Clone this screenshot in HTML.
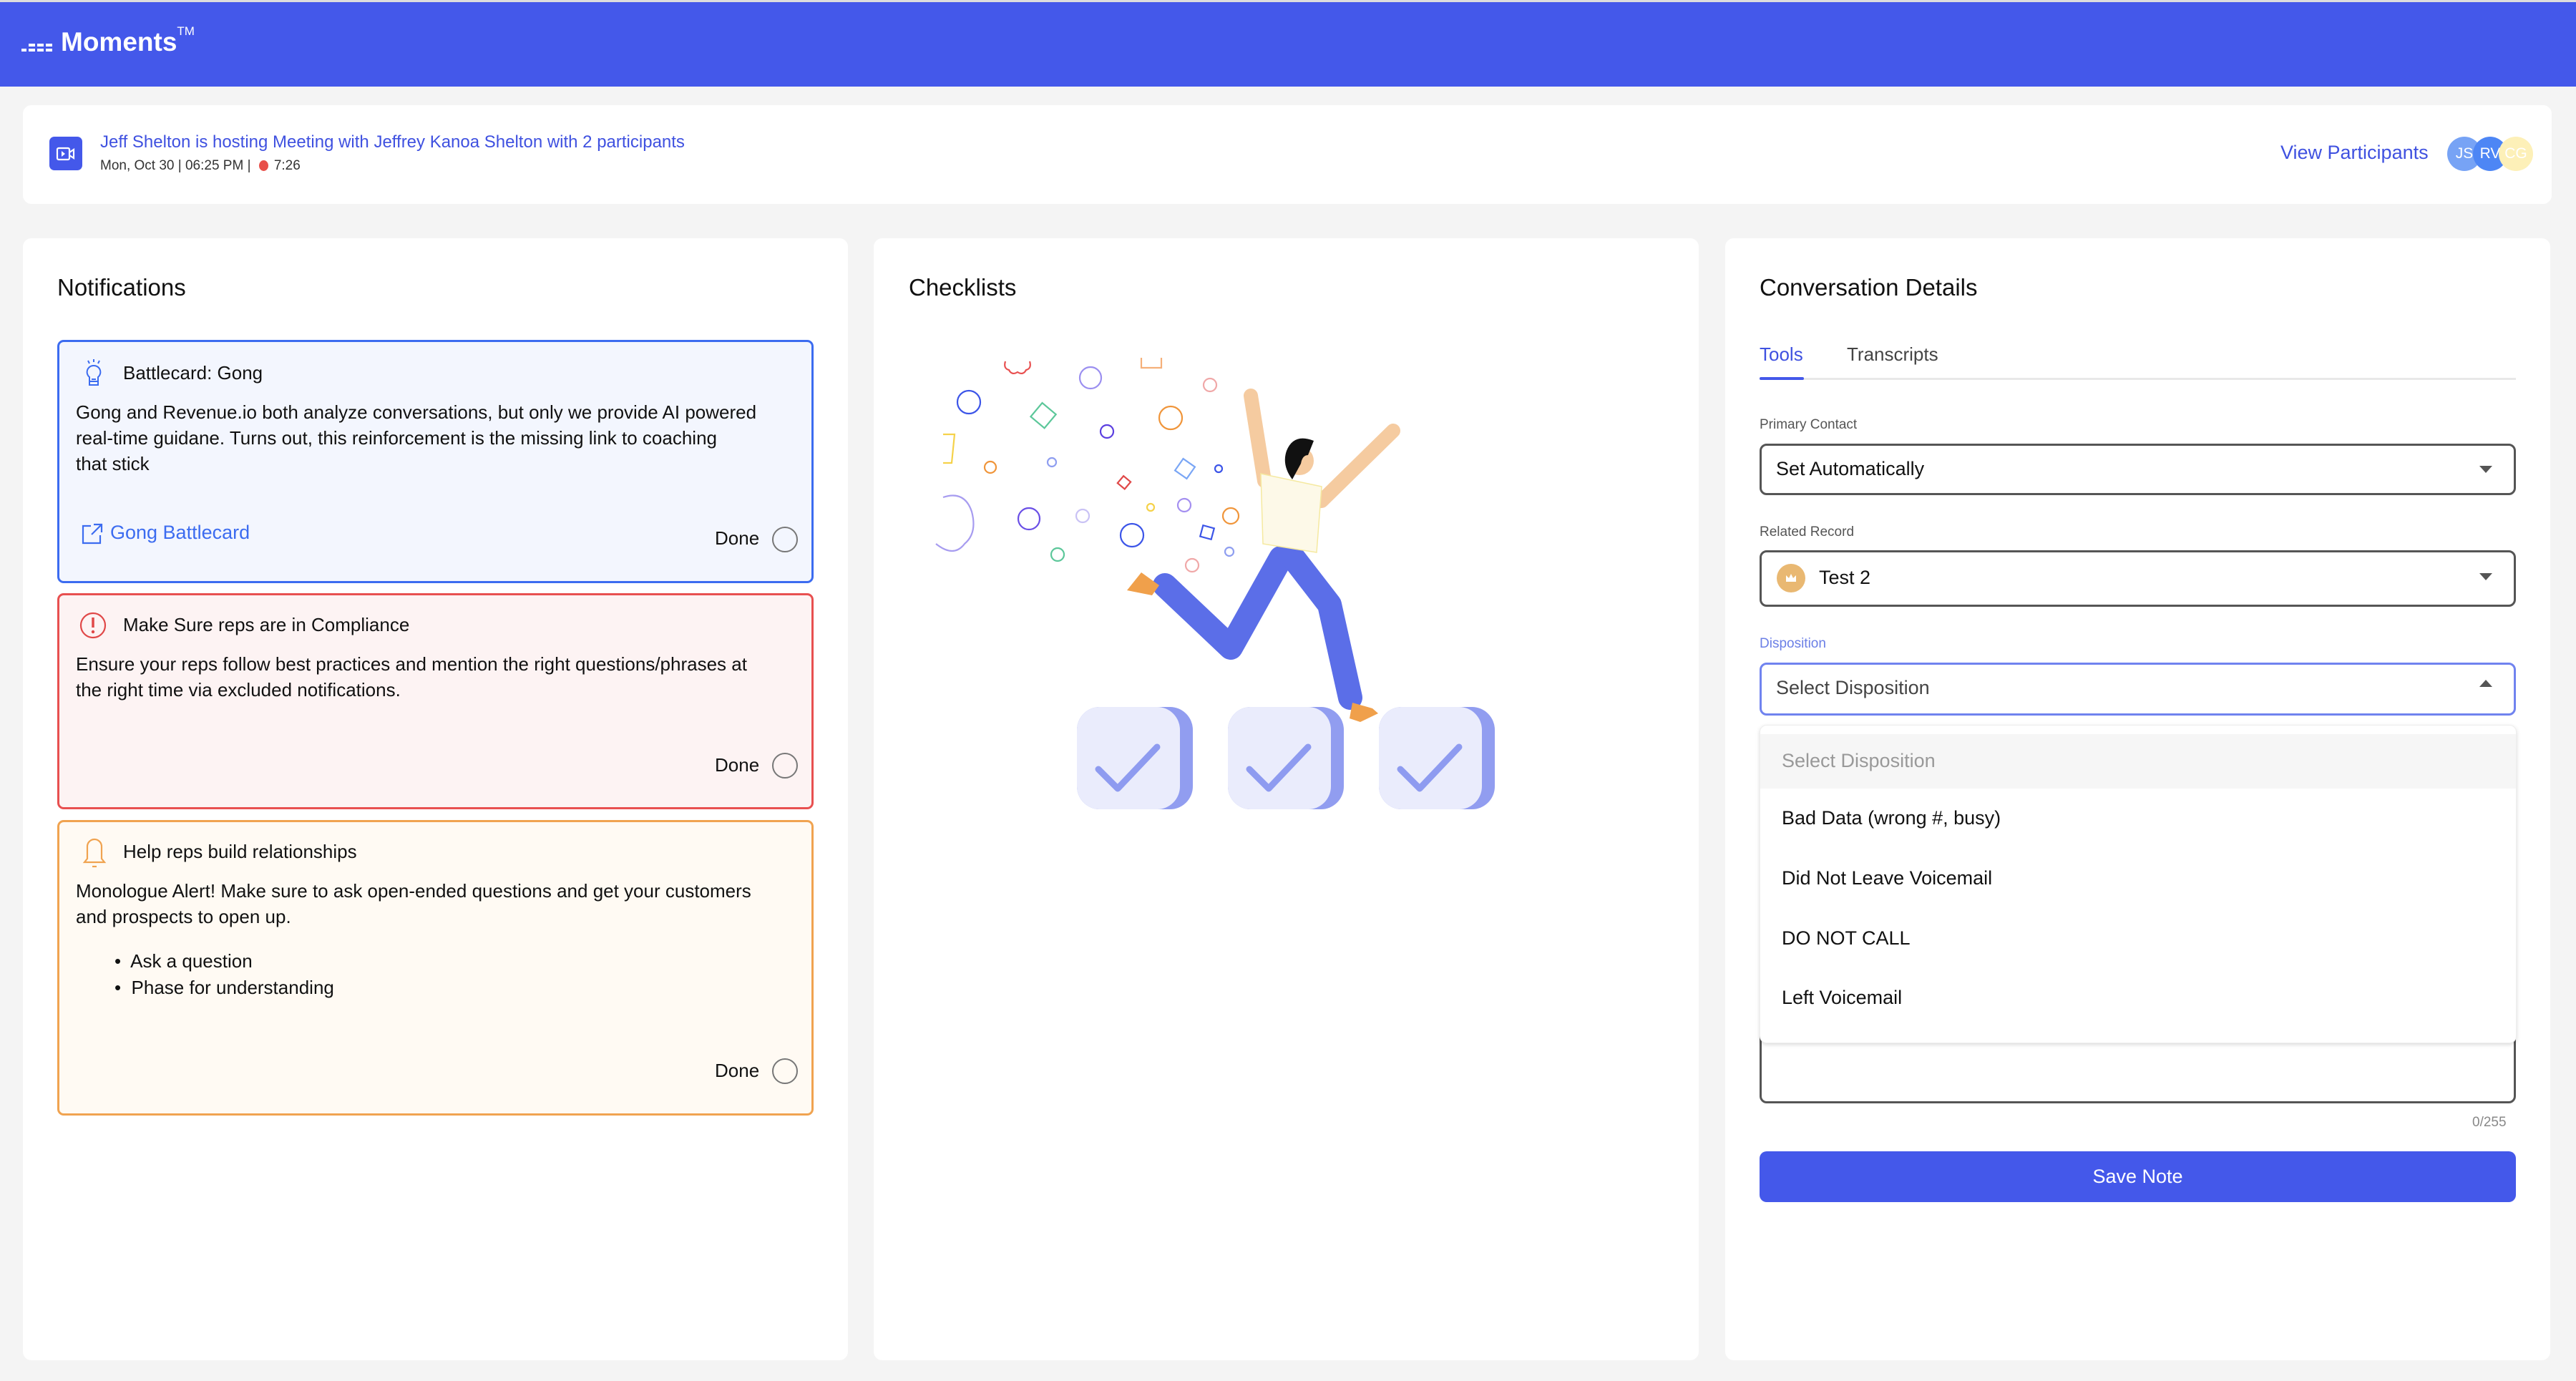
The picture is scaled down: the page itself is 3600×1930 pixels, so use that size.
<!DOCTYPE html>
<html><head><meta charset="utf-8"><style>
*{box-sizing:border-box;margin:0;padding:0}
body{width:3600px;height:1930px;background:#f4f4f4;font-family:"Liberation Sans",sans-serif;position:relative;overflow:hidden;color:#111}
.a{position:absolute;white-space:nowrap}
.hdr{left:0;top:3px;width:3600px;height:118px;background:#4458ea}
.panel{background:#fff;border-radius:12px;top:333px;height:1568px}
.card{border-radius:9px;border:3px solid}
.t26{font-size:26px;line-height:36px}
.done{font-size:26px}
.circ{width:36px;height:36px;border:2px solid #777;border-radius:50%}
.lbl{font-size:19px;color:#555}
.sel{left:2459px;width:1057px;border:3px solid #555;border-radius:10px;background:#fff}
.opt{left:2490px;font-size:27px;color:#111}
</style></head><body>
<div class="a" style="left:0;top:0;width:3600px;height:3px;background:#ddd"></div>
<div class="a hdr"></div>
<svg class="a" style="left:30px;top:55px" width="50" height="20" viewBox="0 0 50 20"><g fill="#fff"><rect x="0" y="13" width="7" height="4"/><rect x="10" y="13" width="9" height="4"/><rect x="22" y="13" width="9" height="4"/><rect x="34" y="13" width="9" height="4"/><rect x="10" y="6" width="9" height="4"/><rect x="22" y="6" width="9" height="4"/><rect x="34" y="6" width="9" height="4"/></g></svg>
<div class="a" style="left:85px;top:38px;font-size:37px;font-weight:bold;color:#fff">Moments<sup style="font-size:17px;font-weight:normal;vertical-align:top;position:relative;top:-4px">TM</sup></div>

<div class="a" style="left:32px;top:147px;width:3534px;height:138px;background:#fff;border-radius:12px"></div>
<div class="a" style="left:69px;top:191px;width:46px;height:47px;background:#4458ea;border-radius:7px"></div>
<svg class="a" style="left:77px;top:200px" width="30" height="30" viewBox="0 0 30 30"><rect x="3" y="7" width="17" height="16" rx="2" fill="none" stroke="#fff" stroke-width="2.2"/><path d="M20 13l6-4v12l-6-4" fill="none" stroke="#fff" stroke-width="2.2"/><path d="M9 11l5 4-5 4z" fill="#fff"/></svg>
<div class="a" style="left:140px;top:185px;font-size:24px;color:#3f51e0">Jeff Shelton is hosting Meeting with Jeffrey Kanoa Shelton with 2 participants</div>
<div class="a" style="left:140px;top:221px;font-size:19px;color:#333">Mon, Oct 30 | 06:25 PM | <span style="display:inline-block;width:13px;height:15px;border-radius:50%;background:#e8504a;margin:0 8px -2px 6px"></span>7:26</div>
<div class="a" style="left:3187px;top:198px;font-size:27px;color:#3f51e0">View Participants</div>
<div class="a" style="left:3420px;top:191px;width:48px;height:48px;border-radius:50%;background:#77a3f5;color:#fff;font-size:21px;text-align:center;line-height:48px">JS</div>
<div class="a" style="left:3456px;top:191px;width:48px;height:48px;border-radius:50%;background:#4d86f5;color:#fff;font-size:21px;text-align:center;line-height:48px">RV</div>
<div class="a" style="left:3492px;top:191px;width:48px;height:48px;border-radius:50%;background:#fdf0b8;color:#fff;font-size:21px;text-align:center;line-height:48px">CG</div>

<div class="a panel" style="left:32px;width:1153px"></div>
<div class="a panel" style="left:1221px;width:1153px"></div>
<div class="a panel" style="left:2411px;width:1153px"></div>

<div class="a" style="left:80px;top:383px;font-size:33px">Notifications</div>
<div class="a" style="left:1270px;top:383px;font-size:33px">Checklists</div>
<div class="a" style="left:2459px;top:383px;font-size:33px">Conversation Details</div>

<!-- card1 -->
<div class="a card" style="left:80px;top:475px;width:1057px;height:340px;border-color:#3c6cf0;background:#f3f6fe"></div>
<svg class="a" style="left:114px;top:502px" width="34" height="42" viewBox="0 0 34 42"><g fill="none" stroke="#3c6cf0" stroke-width="2"><path d="M9 2l2 4M25 2l-2 4M17 0v4"/><path d="M17 9a9 9 0 0 0-6 16v6h12v-6a9 9 0 0 0-6-16z"/><path d="M11 31v5h12v-5M14 28h6"/></g></svg>
<div class="a" style="left:172px;top:506px;font-size:26px">Battlecard: Gong</div>
<div class="a t26" style="left:106px;top:558px">Gong and Revenue.io both analyze conversations, but only we provide AI powered<br>real-time guidane. Turns out, this reinforcement is the missing link to coaching<br>that stick</div>
<svg class="a" style="left:113px;top:730px" width="32" height="32" viewBox="0 0 32 32"><g fill="none" stroke="#3c6cf0" stroke-width="2.2"><path d="M14 5H3v24h24V18"/><path d="M18 3h11v11M29 3L15 17"/></g></svg>
<div class="a" style="left:154px;top:729px;font-size:27px;color:#3c6cf0">Gong Battlecard</div>
<div class="a done" style="left:999px;top:737px">Done</div>
<div class="a circ" style="left:1079px;top:736px"></div>

<!-- card2 -->
<div class="a card" style="left:80px;top:829px;width:1057px;height:302px;border-color:#e85050;background:#fdf3f3"></div>
<svg class="a" style="left:110px;top:853px" width="40" height="42" viewBox="0 0 40 42"><circle cx="20" cy="21" r="17" fill="none" stroke="#e04848" stroke-width="2.2"/><path d="M20 10v14" stroke="#e04848" stroke-width="3.5"/><circle cx="20" cy="30" r="2.2" fill="#e04848"/></svg>
<div class="a" style="left:172px;top:858px;font-size:26px">Make Sure reps are in Compliance</div>
<div class="a t26" style="left:106px;top:910px">Ensure your reps follow best practices and mention the right questions/phrases at<br>the right time via excluded notifications.</div>
<div class="a done" style="left:999px;top:1054px">Done</div>
<div class="a circ" style="left:1079px;top:1052px"></div>

<!-- card3 -->
<div class="a card" style="left:80px;top:1146px;width:1057px;height:413px;border-color:#f0a350;background:#fffaf3"></div>
<svg class="a" style="left:112px;top:1171px" width="40" height="44" viewBox="0 0 40 44"><g fill="none" stroke="#f0a350" stroke-width="2.2"><path d="M6 34h28l-4-5V12a10 10 0 0 0-20 0v17z"/><path d="M17 40h6"/></g></svg>
<div class="a" style="left:172px;top:1175px;font-size:26px">Help reps build relationships</div>
<div class="a t26" style="left:106px;top:1227px">Monologue Alert! Make sure to ask open-ended questions and get your customers<br>and prospects to open up.</div>
<div class="a t26" style="left:160px;top:1325px">•&nbsp; Ask a question</div>
<div class="a t26" style="left:160px;top:1362px">•&nbsp; Phase for understanding</div>
<div class="a done" style="left:999px;top:1481px">Done</div>
<div class="a circ" style="left:1079px;top:1479px"></div>

<!-- illustration -->
<svg class="a" style="left:1250px;top:450px" width="900" height="700" viewBox="0 0 900 700">
<g fill="none" stroke-width="2.2">
<path d="M155 55q-3 10 5 12q4 8 12 3q8 5 12-3q8-2 5-12" stroke="#e85050"/>
<circle cx="274" cy="78" r="15" stroke="#9b8ff0"/>
<path d="M345 50v14h28v-14" stroke="#f5b07a"/>
<circle cx="441" cy="88" r="9" stroke="#f0a8a8"/>
<circle cx="104" cy="112" r="16" stroke="#3c55e8"/>
<rect x="196" y="118" width="25" height="25" transform="rotate(40 208 130)" stroke="#5cc79a"/>
<circle cx="386" cy="134" r="16" stroke="#f0953a"/>
<circle cx="297" cy="153" r="9" stroke="#5b3fe0"/>
<path d="M68 157h16l-4 40h-12" stroke="#f5d24a"/>
<circle cx="134" cy="203" r="8" stroke="#f0953a"/>
<circle cx="220" cy="196" r="6" stroke="#8f9ef0"/>
<rect x="314" y="218" width="13" height="13" transform="rotate(40 321 225)" stroke="#e04848"/>
<rect x="396" y="195" width="20" height="20" transform="rotate(35 406 205)" stroke="#7aa6f5"/>
<circle cx="453" cy="205" r="5" stroke="#3c55e8"/>
<path d="M68 245q30-10 40 20q8 30-10 45q-15 20-40 0" stroke="#a79cf0"/>
<circle cx="188" cy="275" r="15" stroke="#6a4fe6"/>
<circle cx="263" cy="271" r="9" stroke="#c9c2f5"/>
<circle cx="358" cy="259" r="5" stroke="#f5d24a"/>
<circle cx="405" cy="256" r="9" stroke="#a48ff0"/>
<circle cx="470" cy="271" r="11" stroke="#f0953a"/>
<circle cx="332" cy="298" r="16" stroke="#3c55e8"/>
<rect x="429" y="286" width="16" height="16" transform="rotate(15 437 294)" stroke="#3c55e8"/>
<circle cx="468" cy="321" r="6" stroke="#8f9ef0"/>
<circle cx="228" cy="325" r="9" stroke="#5cc79a"/>
<circle cx="416" cy="340" r="9" stroke="#f0a8a8"/>
</g>
<g stroke-linecap="round" fill="none">
<path d="M517 222L498 103" stroke="#f5cba0" stroke-width="20"/>
<path d="M597 250L697 152" stroke="#f5cba0" stroke-width="20"/>
<path d="M540 330L470 455L378 368" stroke="#5b6ee8" stroke-width="34" stroke-linejoin="round"/>
<path d="M550 320L608 395L637 525" stroke="#5b6ee8" stroke-width="34" stroke-linejoin="round"/>
</g>
<path d="M512 212L597 230L590 322L515 310z" fill="#fdf9e8" stroke="#f5e9a0" stroke-width="1.5"/>
<circle cx="566" cy="194" r="20" fill="#f5cba0"/>
<path d="M548 180q10-25 38-14l-8 20q-8 0-10 12l-12 22q-15-20-8-40z" fill="#111"/>
<path d="M325 375l20-25 25 18-10 14z" fill="#f0a04b"/>
<path d="M640 532l28 8 8 7-25 12-15-5z" fill="#f0a04b"/>
<g>
<rect x="255" y="538" width="162" height="143" rx="32" fill="#919df0"/>
<rect x="255" y="538" width="144" height="143" rx="32" fill="#eaecfc"/>
<path d="M285 625l27 27 55-58" fill="none" stroke="#8e9bf0" stroke-width="9" stroke-linecap="round" stroke-linejoin="round"/>
<rect x="466" y="538" width="162" height="143" rx="32" fill="#919df0"/>
<rect x="466" y="538" width="144" height="143" rx="32" fill="#eaecfc"/>
<path d="M496 625l27 27 55-58" fill="none" stroke="#8e9bf0" stroke-width="9" stroke-linecap="round" stroke-linejoin="round"/>
<rect x="677" y="538" width="162" height="143" rx="32" fill="#919df0"/>
<rect x="677" y="538" width="144" height="143" rx="32" fill="#eaecfc"/>
<path d="M707 625l27 27 55-58" fill="none" stroke="#8e9bf0" stroke-width="9" stroke-linecap="round" stroke-linejoin="round"/>
</g>
</svg>

<!-- right panel -->
<div class="a" style="left:2459px;top:480px;font-size:26px;color:#3f51e0">Tools</div>
<div class="a" style="left:2581px;top:480px;font-size:26px;color:#444">Transcripts</div>
<div class="a" style="left:2459px;top:528px;width:1057px;height:3px;background:#e8e8e8"></div>
<div class="a" style="left:2459px;top:527px;width:62px;height:4px;background:#4458ea;border-radius:2px"></div>

<div class="a lbl" style="left:2459px;top:583px">Primary Contact</div>
<div class="a sel" style="top:620px;height:72px"></div>
<div class="a" style="left:2482px;top:640px;font-size:27px">Set Automatically</div>
<svg class="a" style="left:3465px;top:651px" width="20" height="12"><path d="M0 0h18l-9 10z" fill="#555"/></svg>

<div class="a lbl" style="left:2459px;top:733px">Related Record</div>
<div class="a sel" style="top:769px;height:79px"></div>
<div class="a" style="left:2483px;top:788px;width:40px;height:40px;border-radius:50%;background:#e9b872"></div>
<svg class="a" style="left:2493px;top:798px" width="20" height="20" viewBox="0 0 20 20"><path d="M3 6l4 4 3-6 3 6 4-4v9H3z" fill="#fff"/></svg>
<div class="a" style="left:2542px;top:792px;font-size:27px">Test 2</div>
<svg class="a" style="left:3465px;top:801px" width="20" height="12"><path d="M0 0h18l-9 10z" fill="#555"/></svg>

<div class="a" style="left:2459px;top:889px;font-size:19px;color:#6b7fe6">Disposition</div>
<div class="a sel" style="top:926px;height:74px;border-color:#7083ef"></div>
<div class="a" style="left:2482px;top:946px;font-size:27px;color:#444">Select Disposition</div>
<svg class="a" style="left:3465px;top:950px" width="20" height="12"><path d="M0 10h18l-9-10z" fill="#555"/></svg>

<div class="a sel" style="top:1430px;height:112px"></div>
<div class="a" style="left:2459px;top:1013px;width:1058px;height:445px;background:#fff;border-radius:10px;box-shadow:0 2px 6px rgba(0,0,0,.15);border:1px solid #eee"></div>
<div class="a" style="left:2460px;top:1026px;width:1056px;height:76px;background:#f6f6f6"></div>
<div class="a opt" style="top:1048px;color:#999">Select Disposition</div>
<div class="a opt" style="top:1128px">Bad Data (wrong #, busy)</div>
<div class="a opt" style="top:1212px">Did Not Leave Voicemail</div>
<div class="a opt" style="top:1296px">DO NOT CALL</div>
<div class="a opt" style="top:1379px">Left Voicemail</div>

<div class="a" style="left:3455px;top:1558px;font-size:19px;color:#888">0/255</div>
<div class="a" style="left:2459px;top:1609px;width:1057px;height:71px;background:#4458ea;border-radius:10px;color:#fff;font-size:27px;text-align:center;line-height:71px">Save Note</div>
</body></html>
